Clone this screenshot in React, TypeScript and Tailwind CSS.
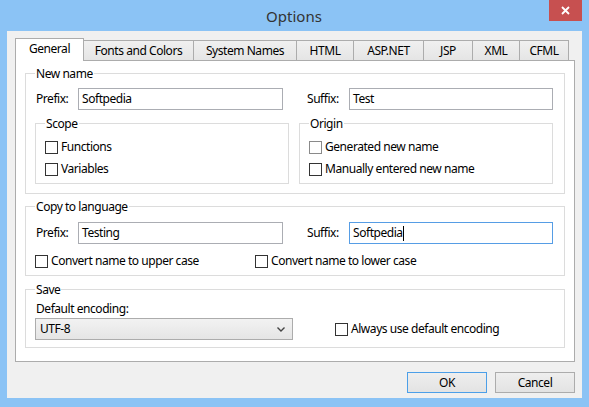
import React from "react";

type Tab = { label: string; w: string };

const tabs: Tab[] = [
  { label: "General", w: "w-[69px]" },
  { label: "Fonts and Colors", w: "w-[111px]" },
  { label: "System Names", w: "w-[104px]" },
  { label: "HTML", w: "w-[58px]" },
  { label: "ASP.NET", w: "w-[71px]" },
  { label: "JSP", w: "w-[50px]" },
  { label: "XML", w: "w-[48px]" },
  { label: "CFML", w: "w-[50px]" },
];

function Check({ label, faded }: { label: string; faded?: boolean }) {
  return (
    <div className="flex items-center h-[16px]">
      <span
        className={`w-[13px] h-[13px] shrink-0 border bg-white ${
          faded ? "border-[#8a8a8a]" : "border-[#333333]"
        }`}
      />
      <span className="ml-[3px] whitespace-nowrap">{label}</span>
    </div>
  );
}

function Group({
  title,
  className,
  children,
}: {
  title: string;
  className?: string;
  children: React.ReactNode;
}) {
  return (
    <fieldset className={`border border-[#dcdcdc] pl-[9px] ${className ?? ""}`}>
      <legend className="px-[1px] leading-[15px]">{title}</legend>
      {children}
    </fieldset>
  );
}

function TextBox({ value, focused, w }: { value: string; focused?: boolean; w: string }) {
  return (
    <div
      className={`${w} h-[22px] flex items-center pl-[3px] bg-white border ${
        focused ? "border-[#569de5]" : "border-[#abadb3]"
      }`}
    >
      <span>{value}</span>
      {focused && <span className="w-px h-[15px] bg-black" />}
    </div>
  );
}

export default function App() {
  return (
    <div className="w-[589px] h-[407px] bg-[#8bc3f5] flex flex-col font-['Noto_Sans',sans-serif] text-[12px] leading-[16px] tracking-[-0.45px] text-black overflow-hidden">
      {/* title bar */}
      <div className="h-[31px] flex items-start shrink-0">
        <div className="w-[39px]" />
        <div className="flex-1 h-[31px] flex items-center justify-center text-[15px] text-[#333333] tracking-normal">
          Options
        </div>
        <button className="w-[33px] h-[21px] mr-[7px] bg-[#c75050] flex items-center justify-center">
          <svg width="9" height="9" viewBox="0 0 9 9">
            <path d="M1 1 L8 8 M8 1 L1 8" stroke="#ffffff" strokeWidth="1.8" />
          </svg>
        </button>
      </div>

      {/* client area */}
      <div className="mx-[7px] h-[367px] bg-[#f0f0f0] pt-[7px] pl-[8px] pr-[7px] flex flex-col">
        {/* tabs */}
        <div className="flex items-end h-[22px]">
          {tabs.map((t, i) =>
            i === 0 ? (
              <div
                key={t.label}
                className={`${t.w} h-[23px] -mb-px relative z-10 bg-white border border-b-0 border-[#acacac] flex items-center justify-center pb-[2px]`}
              >
                {t.label}
              </div>
            ) : (
              <div
                key={t.label}
                className={`${t.w} h-[20px] -ml-px bg-gradient-to-b from-[#f0f0f0] to-[#e5e5e5] border border-b-0 border-[#acacac] flex items-center justify-center`}
              >
                {t.label}
              </div>
            )
          )}
        </div>

        {/* tab page */}
        <div className="h-[302px] bg-white border border-[#acacac] pt-[5px] px-[9px] flex flex-col gap-[5px]">
          <Group title="New name" className="pt-[7px] pb-[9px] pr-[10px]">
            <div className="flex items-center">
              <div className="flex items-center w-[248px] pl-px">
                <span className="w-[42px]">Prefix:</span>
                <TextBox value="Softpedia" w="w-[205px]" />
              </div>
              <div className="flex items-center ml-[24px]">
                <span className="w-[42px]">Suffix:</span>
                <TextBox value="Test" w="w-[204px]" />
              </div>
            </div>
            <div className="flex gap-[10px] mt-[6px]">
              <Group title="Scope" className="w-[254px] pt-[8px] pb-[6px]">
                <div className="flex flex-col gap-[6px]">
                  <Check label="Functions" />
                  <Check label="Variables" />
                </div>
              </Group>
              <Group title="Origin" className="w-[254px] pt-[8px] pb-[6px]">
                <div className="flex flex-col gap-[6px]">
                  <Check label="Generated new name" faded />
                  <Check label="Manually entered new name" />
                </div>
              </Group>
            </div>
          </Group>

          <Group title="Copy to language" className="pt-[8px] pb-[6px] pr-[10px]">
            <div className="flex items-center">
              <div className="flex items-center w-[248px] pl-px">
                <span className="w-[42px]">Prefix:</span>
                <TextBox value="Testing" w="w-[205px]" />
              </div>
              <div className="flex items-center ml-[24px]">
                <span className="w-[42px]">Suffix:</span>
                <TextBox value="Softpedia" focused w="w-[204px]" />
              </div>
            </div>
            <div className="flex mt-[9px]">
              <div className="w-[220px]">
                <Check label="Convert name to upper case" />
              </div>
              <Check label="Convert name to lower case" />
            </div>
          </Group>

          <Group title="Save" className="mt-px pt-[4px] pb-[7px] pr-[10px]">
            <div className="pl-px">Default encoding:</div>
            <div className="flex items-center mt-[1px]">
              <div className="w-[258px] h-[22px] border border-[#acacac] bg-gradient-to-b from-[#f2f2f2] to-[#e5e5e5] flex items-center pl-[4px] pr-[7px]">
                <span className="flex-1">UTF-8</span>
                <svg width="8" height="5" viewBox="0 0 8 5">
                  <path d="M0.5 0.5 L4 4 L7.5 0.5" fill="none" stroke="#444444" strokeWidth="1.4" />
                </svg>
              </div>
              <div className="ml-[42px]">
                <Check label="Always use default encoding" />
              </div>
            </div>
          </Group>
        </div>

        {/* buttons */}
        <div className="flex justify-end gap-[8px] mt-[10px]">
          <button className="w-[80px] h-[21px] border border-[#4c9fe8] bg-gradient-to-b from-[#eeeeee] to-[#e3e3e3] flex items-center justify-center">
            OK
          </button>
          <button className="w-[80px] h-[21px] border border-[#acacac] bg-gradient-to-b from-[#eeeeee] to-[#e3e3e3] flex items-center justify-center">
            Cancel
          </button>
        </div>
      </div>
    </div>
  );
}
